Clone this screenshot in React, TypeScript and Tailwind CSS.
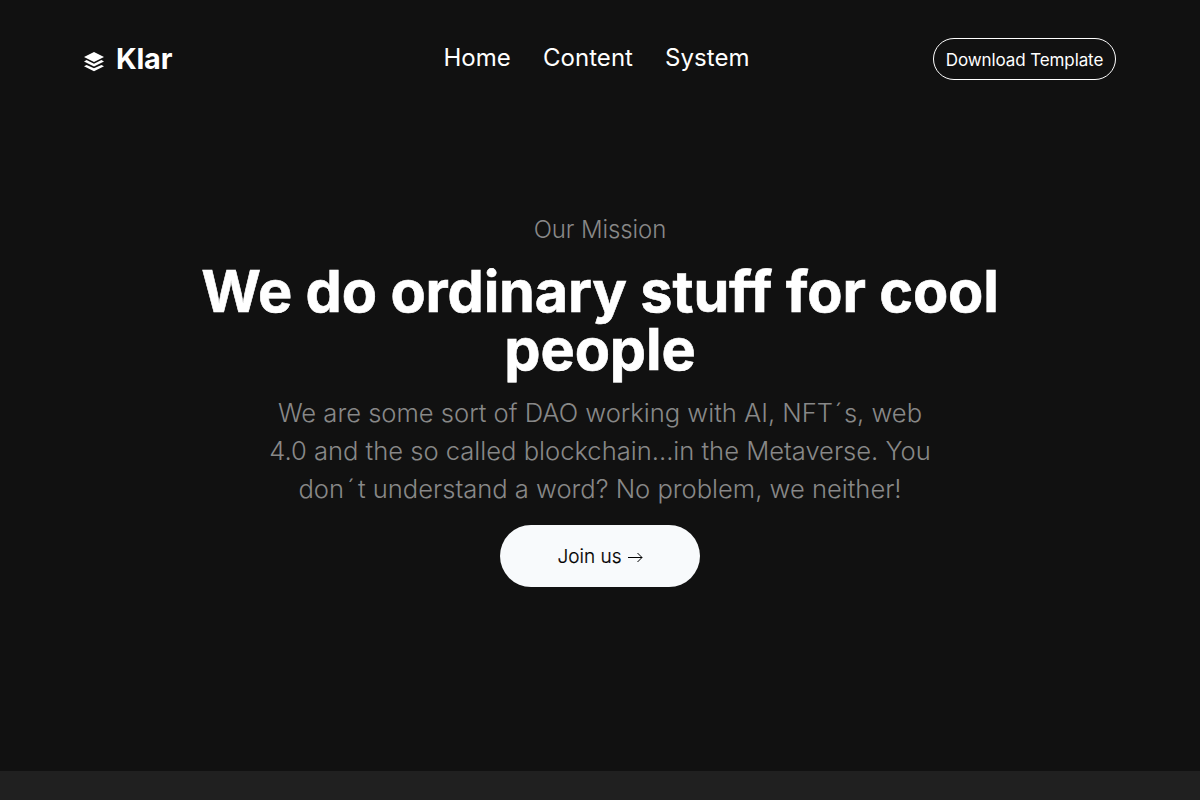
const links = ["Home", "Content", "System"];

function StackIcon() {
  return (
    <svg viewBox="0 0 20 20" className="mt-1.5 size-5" fill="currentColor">
      <path d="M10 0L20 4.9L10 9.9L0 4.9Z" />
      <path d="M0 9.5L2.6 8.1L10 11.7L17.4 8.1L20 9.5L10 14.5Z" />
      <path d="M0 14.3L2.6 12.9L10 16.3L17.4 12.9L20 14.3L10 19.3Z" />
    </svg>
  );
}

export default function App() {
  return (
    <div className="min-h-[800px] bg-[#202020] font-['Inter',sans-serif] text-white">
      <div className="h-[771px] bg-[#111111]">
        <header className="flex h-[118px] items-center justify-between px-[84px]">
          <a className="flex w-[359px] items-center gap-3 text-[28.8px] font-bold leading-9 tracking-[-0.2px]">
            <StackIcon />
            <span>Klar</span>
          </a>
          <nav className="flex gap-8 pb-0.5 text-2xl tracking-[0.05px]">
            {links.map((l) => (
              <a key={l}>{l}</a>
            ))}
          </nav>
          <div className="flex w-[366px] justify-end">
            <button className="h-[42px] w-[183px] rounded-full border border-white pt-1 text-[17px] tracking-[-0.1px]">Download Template</button>
          </div>
        </header>
        <main className="flex flex-col items-center pt-[94px] text-center">
          <p className="text-2xl font-light leading-9 tracking-[-0.1px] text-[#888888]">Our Mission</p>
          <h1 className="mt-3.5 w-[900px] text-[57.6px] font-bold leading-[58px] tracking-[-0.15px] [-webkit-text-stroke:0.6px_white]">We do ordinary stuff for cool people</h1>
          <p className="mt-4 w-[672px] text-[25.6px] font-light leading-[38px] tracking-[-0.02px] text-[#888888]">
            We are some sort of DAO working with AI, NFT<span className="px-[1.5px]">´</span>s, web 4.0 and the so called blockchain...in the Metaverse. You don<span className="px-[3px]">´</span>t understand a word? No problem, we neither!
          </p>
          <button className="mt-[17px] flex h-[62px] w-[200px] items-center justify-center gap-[5px] rounded-full bg-[#f8fafc] pt-0.5 text-[19px] font-light text-black [-webkit-text-stroke:0.2px_black]">
            Join us
            <svg viewBox="0 0 16 12" className="h-3 w-4" fill="none" stroke="currentColor" strokeWidth="1">
              <path d="M1 6.5H15M10.5 2L15 6.5L10.5 11" />
            </svg>
          </button>
        </main>
      </div>
    </div>
  );
}
